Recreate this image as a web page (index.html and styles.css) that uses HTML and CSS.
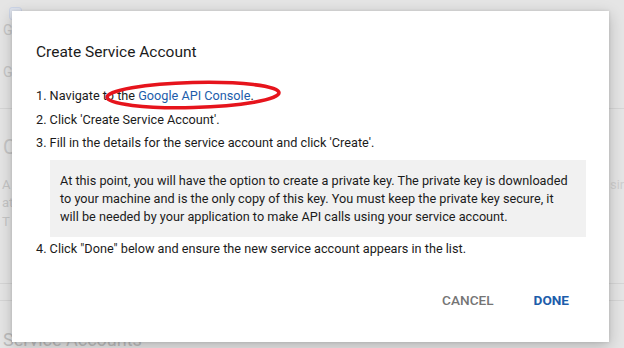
FILE: index.html
```html
<!DOCTYPE html>
<html lang="en">
<head>
    <meta charset="UTF-8">
    <title>Create Service Account</title>
    <link rel="stylesheet" href="styles.css">
</head>
<body>
    <!-- page behind the dialog -->
    <div class="page">
        <div class="page-icon"></div>
        <div class="page-row">G</div>
        <div class="page-row second">G</div>
        <div class="page-rule"></div>
        <div class="page-head">C</div>
        <div class="page-para">
            <div>A<br>at</div>
            <div class="page-side">sir</div>
        </div>
        <div class="page-text">T</div>
        <div class="page-rule low"></div>
        <div class="page-rule lower"></div>
        <div class="page-title">Service Accounts</div>
    </div>

    <div class="dialog">
        <h1>Create Service Account</h1>
        <ol class="steps">
            <li>1. Navigate to the <a href="#">Google API Console</a>.<svg class="mark" width="180" height="34" viewBox="0 0 180 34">
                    <ellipse cx="90" cy="17" rx="86" ry="12.5" fill="none" stroke="#e6141c" stroke-width="3.6" transform="rotate(-1.5 90 17)"/>
                </svg></li>
            <li>2. Click 'Create Service Account'.</li>
            <li>3. Fill in the details for the service account and click 'Create'.</li>
        </ol>
        <div class="note">
            At this point, you will have the option to create a private key. The private key is downloaded<br>
            to your machine and is the only copy of this key. You must keep the private key secure, it<br>
            will be needed by your application to make API calls using your service account.
        </div>
        <ol class="steps">
            <li>4. Click "Done" below and ensure the new service account appears in the list.</li>
        </ol>
        <div class="actions">
            <button class="btn cancel">CANCEL</button>
            <button class="btn done">DONE</button>
        </div>
    </div>
</body>
</html>
```

FILE: styles.css
```css
html, body {
    margin: 0;
}
body {
    font-family: Roboto, "Liberation Sans", sans-serif;
    background-color: #e5e5e5;
    color: #1b1b1b;
    overflow: hidden;
    position: relative;
    width: 624px;
    height: 348px;
}
.page {
    color: #c6c6c6;
    font-size: 13px;
}
.page-icon {
    width: 11px;
    height: 11px;
    margin: 7px 0 0 9px;
    border: 1px solid #cdd6e8;
    border-radius: 3px;
    background-color: #dfe4ee;
}
.page-row {
    padding-left: 3px;
    height: 20px;
    line-height: 20px;
    font-size: 14px;
}
.page-row.second {
    margin-top: 22px;
}
.page-rule {
    border-top: 1px solid #d6d6d6;
    margin-top: 26px;
}
.page-rule.low {
    margin-top: 52px;
}
.page-rule.lower {
    margin-top: 16px;
}
.page-head {
    font-size: 20px;
    line-height: 24px;
    margin: 26px 0 0 3px;
}
.page-para {
    display: grid;
    grid-template-columns: 608px auto;
    margin-top: 17px;
    padding-left: 2px;
    line-height: 18px;
}
.page-side {
    color: #d0d0d0;
}
.page-text {
    padding-left: 2px;
    margin-top: 1px;
    line-height: 18px;
}
.page-title {
    margin: 28px 0 0 3px;
    font-size: 18px;
    line-height: 22px;
    color: #bdbdbd;
}
.dialog {
    position: absolute;
    left: 12px;
    top: 11px;
    width: 597px;
    height: 331px;
    box-sizing: border-box;
    padding: 30px 28px 0 24px;
    background-color: #ffffff;
    box-shadow: 0 4px 14px rgba(0, 0, 0, 0.22), 0 0 3px rgba(0, 0, 0, 0.12);
}
h1 {
    margin: 0 0 21px 0;
    font-size: 15.5px;
    font-weight: 400;
    line-height: 22px;
}
.steps {
    list-style: none;
    margin: 0;
    padding: 0;
    font-size: 12.7px;
}
.steps li {
    line-height: 23.5px;
    position: relative;
    white-space: nowrap;
}
.steps a {
    color: #1d5dab;
    text-decoration: none;
}
.mark {
    position: absolute;
    left: 67px;
    top: -6px;
}
.note {
    margin: 5px 0 0 14px;
    width: 536px;
    box-sizing: border-box;
    padding: 12px 10px 11px 10px;
    background-color: #f1f1f1;
    font-size: 12.7px;
    line-height: 18px;
    white-space: nowrap;
}
.actions {
    display: flex;
    justify-content: flex-end;
    gap: 16px;
    margin-top: 25px;
}
.btn {
    background: none;
    border: none;
    font-family: Roboto, "Liberation Sans", sans-serif;
    font-size: 13.6px;
    font-weight: 500;
    line-height: 15px;
    padding: 8px 12px;
    cursor: pointer;
}
.cancel {
    color: #757575;
}
.done {
    color: #1d5dab;
    font-weight: 700;
}
```
